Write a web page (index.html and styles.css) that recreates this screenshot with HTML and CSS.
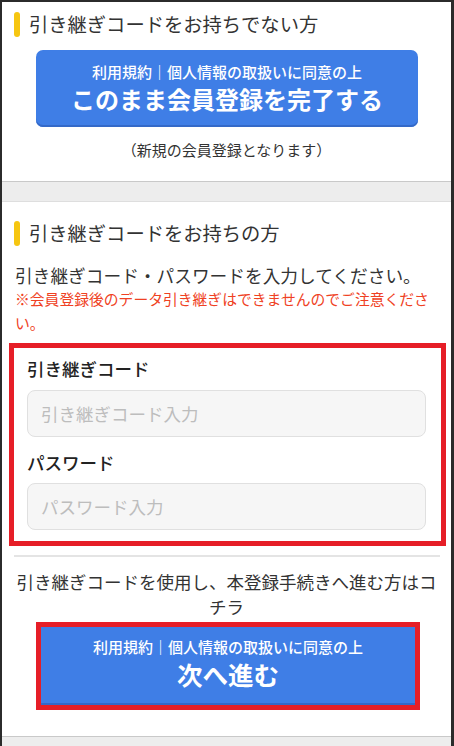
FILE: index.html
```html
<!DOCTYPE html>
<html lang="ja">
<head>
<meta charset="utf-8">
<title>引き継ぎ</title>
<link rel="stylesheet" href="styles.css">
</head>
<body>
<div class="page">
  <section class="sec sec-first">
    <h2 class="sec-title"><span class="bar"></span><span>引き継ぎコードをお持ちでない方</span></h2>
    <button class="btn btn-complete" type="button">
      <span class="btn-sub">利用規約｜個人情報の取扱いに同意の上</span>
      <span class="btn-main">このまま会員登録を完了する</span>
    </button>
    <p class="note">（新規の会員登録となります）</p>
  </section>
  <div class="sep"></div>
  <section class="sec sec-second">
    <h2 class="sec-title"><span class="bar"></span><span>引き継ぎコードをお持ちの方</span></h2>
    <p class="lead">引き継ぎコード・パスワードを入力してください。</p>
    <p class="warn">※会員登録後のデータ引き継ぎはできませんのでご注意ください。</p>
    <div class="form-box">
      <label class="label">引き継ぎコード</label>
      <input class="field field-first" type="text" placeholder="引き継ぎコード入力">
      <label class="label label-second">パスワード</label>
      <input class="field field-second" type="password" placeholder="パスワード入力">
    </div>
    <div class="divider"></div>
    <p class="proceed">引き継ぎコードを使用し、本登録手続きへ進む方はコチラ</p>
    <div class="btn-frame">
      <button class="btn btn-next" type="button">
        <span class="btn-sub">利用規約｜個人情報の取扱いに同意の上</span>
        <span class="btn-main btn-main-next">次へ進む</span>
      </button>
    </div>
  </section>
  <div class="sep sep-last"></div>
</div>
</body>
</html>
```

FILE: styles.css
```css
html, body {
  margin: 0;
  padding: 0;
  height: 746px;
  overflow: hidden;
}
body {
  background: #2b2b2b;
  font-family: "Noto Sans CJK JP", "Noto Sans", sans-serif;
  color: #333;
}
.page {
  margin: 2px 3px 0 2px;
  background: #fff;
}
p { margin: 0; }

.sec-title {
  display: flex;
  align-items: center;
  margin: 0 0 0 12px;
  height: 25px;
  font-size: 19.3px;
  font-weight: 400;
  color: #333;
  line-height: 25px;
}
.bar {
  width: 6px;
  height: 25px;
  border-radius: 3px;
  background: #f6c611;
  margin-right: 9px;
  flex: none;
}

.sec-first {
  padding: 10px 0 20px;
}
.btn {
  display: flex;
  flex-direction: column;
  align-items: center;
  border: none;
  background: #3f7ee6;
  color: #fff;
  font-family: inherit;
  cursor: pointer;
  box-shadow: inset 0 -2px 0 #3469c8;
}
.btn-complete {
  width: 382px;
  height: 77px;
  margin: 13px 0 0 34px;
  padding: 12px 0 0;
  border-radius: 7px;
}
.btn-sub {
  font-size: 15px;
  line-height: 20px;
  font-weight: 500;
}
.btn-main {
  font-size: 24px;
  line-height: 34px;
  font-weight: 700;
}
.btn-main-next {
  font-size: 25.5px;
}
.note {
  margin-top: 12px;
  text-align: center;
  font-size: 15px;
  line-height: 22px;
  color: #333;
}

.sep {
  height: 19px;
  background: #ededed;
  border-top: 1px solid #c9c9c9;
  border-bottom: 1px solid #dedede;
}
.sep-last {
  border-bottom: none;
}

.sec-second {
  padding: 19px 0 26px;
}
.lead {
  margin: 17px 0 0 13px;
  font-size: 17.7px;
  line-height: 24px;
  color: #333;
}
.warn {
  margin: 0 13px;
  font-size: 14.8px;
  line-height: 24px;
  color: #ef4123;
}
.form-box {
  display: flex;
  flex-direction: column;
  margin: 8px 5px 0 7px;
  padding: 8px 15px 11px 13px;
  border: 5px solid #e61e27;
}
.label {
  font-size: 17.5px;
  line-height: 26px;
  font-weight: 500;
  color: #222;
}
.label-second {
  margin-top: 13px;
}
.field {
  box-sizing: border-box;
  height: 47px;
  margin-top: 8px;
  padding: 0 13px;
  border: 1px solid #e0e0e0;
  border-radius: 8px;
  background: #f6f6f6;
  font-family: inherit;
  font-size: 17.5px;
  color: #333;
  outline: none;
}
.field-second {
  margin-top: 7px;
}
.field::placeholder {
  color: #bdbdbd;
}
.divider {
  height: 2px;
  margin: 9px 11px 0 12px;
  background: #e4e4e4;
}
.proceed {
  margin: 12px 12px 0;
  text-align: center;
  font-size: 17.5px;
  line-height: 25px;
  color: #333;
}
.btn-frame {
  width: 374px;
  margin: 3px 0 0 34px;
  border: 5px solid #e61e27;
}
.btn-next {
  width: 374px;
  height: 78px;
  padding: 10px 0 0;
  border-radius: 0;
}
```
